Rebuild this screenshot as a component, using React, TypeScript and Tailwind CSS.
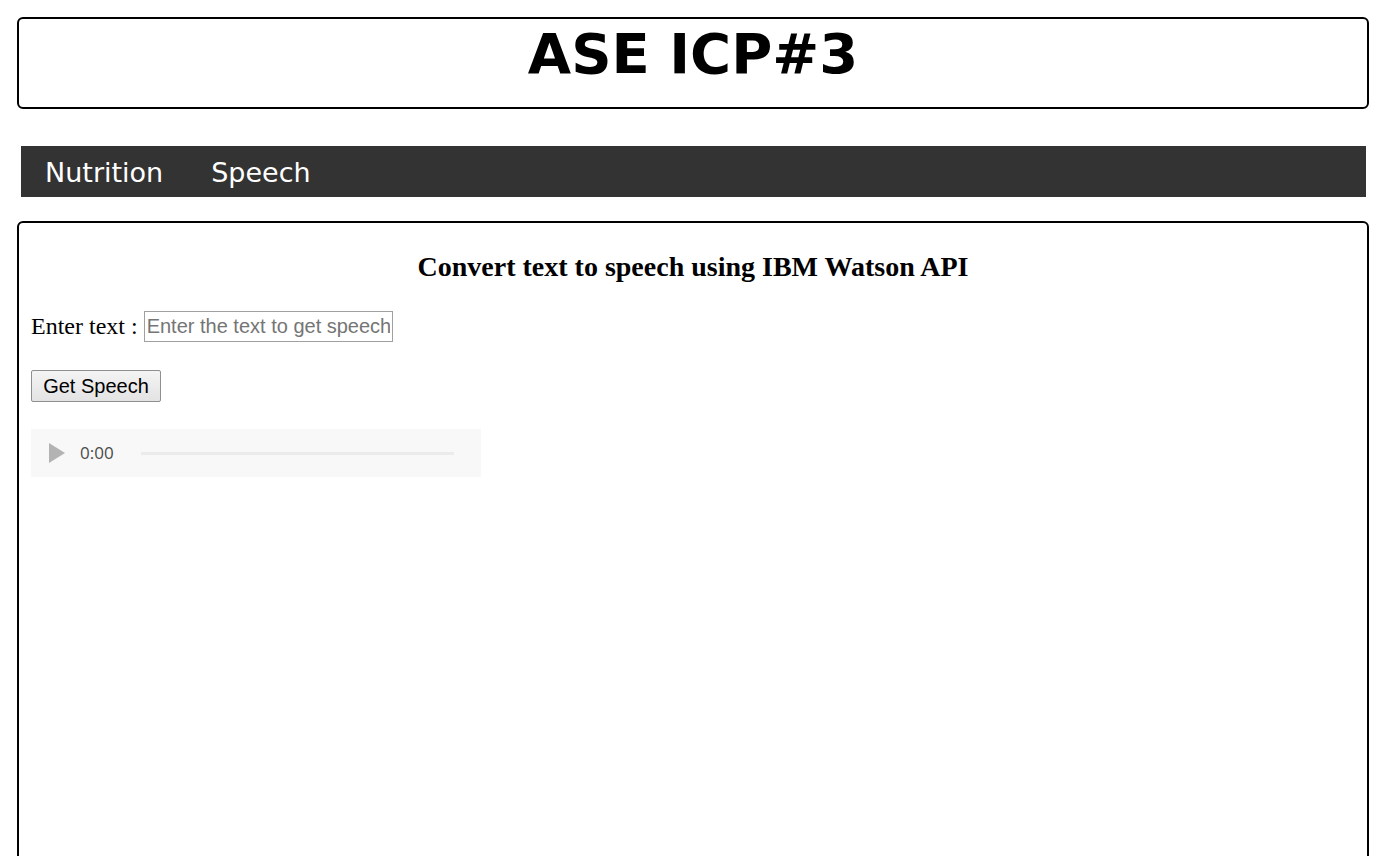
import React from 'react'

const NAV_LINKS = ['Nutrition', 'Speech']

function AudioBar() {
  return (
    <div className="w-[450px] h-[48px] bg-[#f8f8f8] flex items-center">
      <svg width="16" height="20" viewBox="0 0 16 20" className="ml-[18px]">
        <polygon points="0,0 16,10 0,20" fill="#b3b3b3" />
      </svg>
      <span className="ml-[15px] text-[17px] text-[#4a4a4a] font-['Open_Sans',sans-serif]">0:00</span>
      <div className="ml-[27px] w-[313px] h-[3px] bg-[#ebebeb]" />
    </div>
  )
}

export default function App() {
  return (
    <div className="h-screen overflow-hidden bg-white pl-[17px] pr-[13px] pt-[17px] font-['DejaVu_Sans',Verdana,sans-serif] text-black">
      <div className="border-2 border-black rounded-[6px] pt-[3px] pb-[21px]">
        <h1 className="text-center text-[56px] leading-[64px] font-bold">ASE ICP#3</h1>
      </div>

      <nav className="mt-[37px] ml-[4px] mr-[3px] h-[51px] bg-[#333333] flex">
        {NAV_LINKS.map(link => (
          <a key={link} className="px-[24px] pt-[3px] leading-[48px] text-[27px] text-white">
            {link}
          </a>
        ))}
      </nav>

      <div className="mt-[24px] h-[700px] border-2 border-black rounded-[6px] px-[12px] pt-[28px] font-['Liberation_Serif',serif]">
        <h3 className="text-center text-[28px] leading-[32px] font-bold">
          Convert text to speech using IBM Watson API
        </h3>

        <div className="mt-[28px] flex items-center text-[24px] leading-[27px]">
          <span className="whitespace-pre">Enter text : </span>
          <input
            placeholder="Enter the text to get speech"
            className="w-[249px] h-[31px] border border-[#a0a0a0] px-[2px] text-[20px] font-['Liberation_Sans',Arial,sans-serif] placeholder:text-[#757575] outline-none"
          />
        </div>

        <button className="mt-[28px] h-[32px] w-[130px] border border-[#8f8f8f] rounded-[2px] bg-gradient-to-b from-[#f4f4f4] to-[#e3e3e3] text-[20px] font-['Liberation_Sans',Arial,sans-serif] text-black">
          Get Speech
        </button>

        <div className="mt-[27px]">
          <AudioBar />
        </div>
      </div>
    </div>
  )
}
